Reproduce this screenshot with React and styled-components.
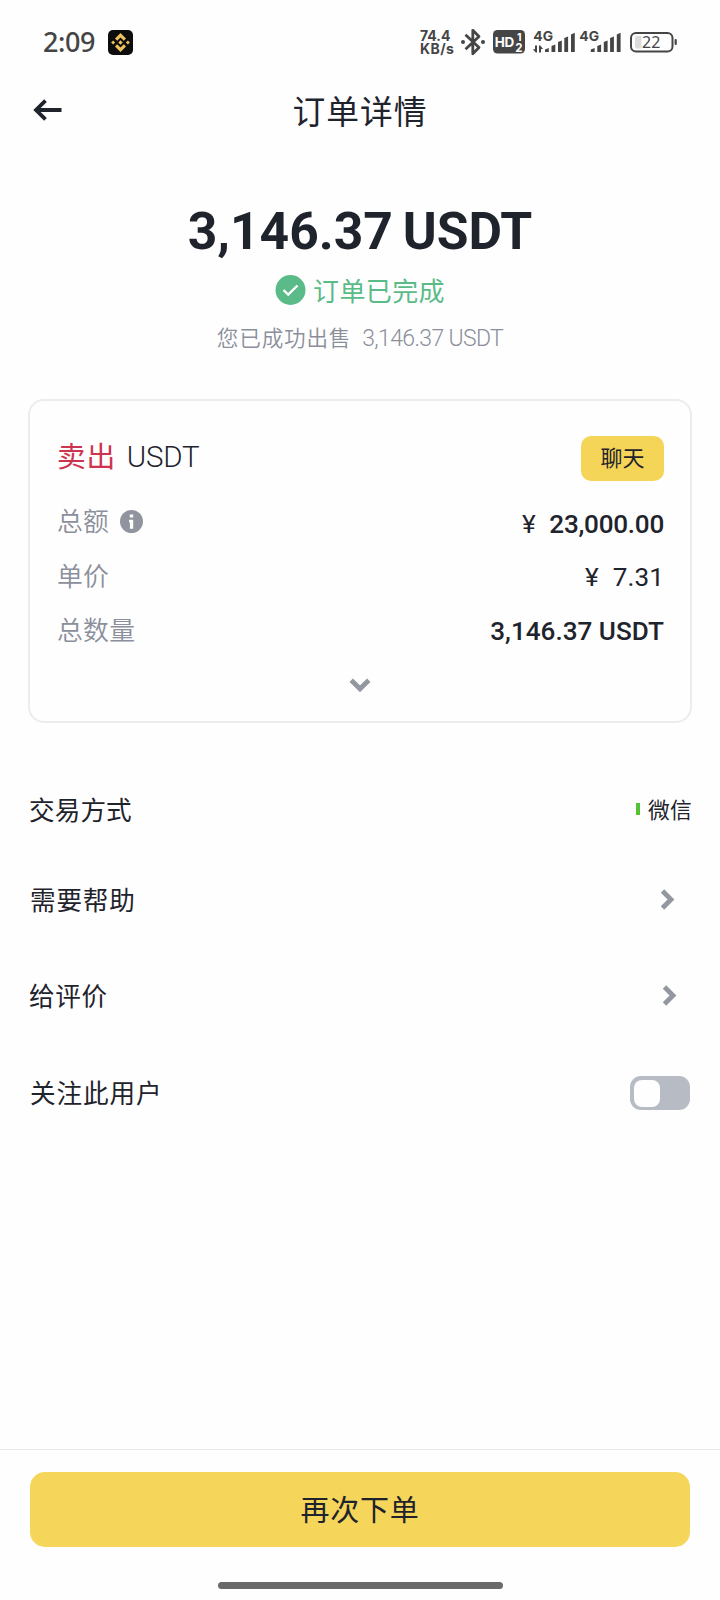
import React, { useState } from 'react';
import styled, { createGlobalStyle } from 'styled-components';

const GlobalStyle = createGlobalStyle`
  * {
    box-sizing: border-box;
  }

  body {
    margin: 0;
    background: #fefefe;
    color: #1f232c;
    font-family: "Noto Sans CJK SC", sans-serif;
  }

  button {
    border: 0;
    padding: 0;
    background: none;
    color: inherit;
    font-family: inherit;
  }

  svg {
    display: block;
  }
`;

const Screen = styled.div`
  display: flex;
  flex-direction: column;
  width: 720px;
  height: 1600px;
  background: #fefefe;
`;

const StatusBar = styled.div`
  display: flex;
  justify-content: space-between;
  align-items: center;
  height: 84px;
  padding: 0 43px 0 43px;
  color: #454545;
`;

const StatusGroup = styled.div`
  display: flex;
  align-items: center;
`;

const Clock = styled.span`
  margin-right: 13px;
  font: 500 27px/30px "Noto Sans", sans-serif;
  letter-spacing: -0.4px;
`;

const NetworkSpeed = styled.div`
  width: 42px;
  padding-left: 1px;
  font: 700 14px/13px Inter, sans-serif;
`;

const SpeedUnit = styled.div`
  letter-spacing: 0.4px;
`;

const Header = styled.header`
  display: grid;
  grid-template-columns: 60px 1fr 60px;
  align-items: center;
  height: 52px;
  padding: 0 30px;
`;

const BackButton = styled.button`
  width: 34px;
  height: 30px;
`;

const Title = styled.h1`
  margin: 0;
  text-align: center;
  font-size: 32.8px;
  font-weight: 400;
  line-height: 48px;
  letter-spacing: 1px;
`;

const Summary = styled.section`
  display: flex;
  flex-direction: column;
  align-items: center;
  height: 263px;
  padding-top: 66px;
`;

const Amount = styled.div`
  font: 700 51.6px/60px Roboto, sans-serif;
  letter-spacing: 0;
  word-spacing: -3px;
`;

const OrderState = styled.div`
  display: flex;
  align-items: center;
  gap: 7px;
  height: 36px;
  margin-top: 10px;
  color: #5abb88;
  font-size: 26px;
  line-height: 36px;
  letter-spacing: 0.4px;
`;

const Note = styled.div`
  display: flex;
  gap: 11px;
  margin-top: 13px;
  color: #8a8f9b;
  font-size: 21.6px;
  font-weight: 350;
  line-height: 32px;
  letter-spacing: 0.8px;
`;

const NoteAmount = styled.span`
  padding-top: 2px;
  font: 350 23px/32px Roboto, sans-serif;
  letter-spacing: -0.65px;
`;

const Card = styled.section`
  display: flex;
  flex-direction: column;
  height: 324px;
  margin: 0 28px;
  padding: 35px 26px 0 27px;
  border: 2px solid #ececee;
  border-radius: 16px;
`;

const CardHeader = styled.div`
  display: flex;
  justify-content: space-between;
  height: 59px;
`;

const Side = styled.div`
  display: flex;
  gap: 11px;
  color: #cd3450;
  font-size: 28.8px;
  line-height: 37px;
  letter-spacing: 0.6px;
`;

const Asset = styled.span`
  color: #1f232c;
  font: 350 29.5px/43px Roboto, sans-serif;
  letter-spacing: -0.2px;
`;

const ChatButton = styled.button`
  width: 83px;
  height: 45px;
  padding-bottom: 4px;
  border-radius: 10px;
  background: #f4d558;
  font-size: 22px;
  line-height: 41px;
`;

const CardRow = styled.div`
  display: flex;
  justify-content: space-between;
  height: 54.5px;
`;

const Label = styled.div`
  display: flex;
  gap: 11px;
  padding-top: 1px;
  color: #8a8f9b;
  font-size: 25.8px;
  font-weight: 350;
  line-height: 48px;
  letter-spacing: 0.3px;

  svg {
    margin-top: 14px;
  }
`;

const Value = styled.div`
  display: flex;
  gap: 14px;
  padding-top: ${props => props.$top || 5}px;
  font: ${props => (props.$strong ? 500 : 400)} 26.1px/48px Roboto, sans-serif;
  letter-spacing: ${props => props.$spacing || 0}px;
`;

const Currency = styled.span`
  font-weight: 400;
`;

const ExpandButton = styled.button`
  align-self: center;
  width: 24px;
  height: 18px;
  margin: 17px 2px 0 0;
`;

const List = styled.section`
  flex: 1;
  padding-top: 44px;
`;

const ListRow = styled.div`
  display: flex;
  align-items: center;
  justify-content: space-between;
  height: ${props => props.$height}px;
  padding: 0 ${props => props.$right}px 0 ${props => props.$left}px;
`;

const ListLabel = styled.span`
  padding-bottom: 2px;
  font-size: 25.6px;
  line-height: 36px;
  letter-spacing: ${props => props.$spacing || 0.6}px;
`;

const PayMethod = styled.span`
  display: flex;
  align-items: center;
  gap: 8px;

  &::before {
    content: '';
    width: 4px;
    height: 12px;
    margin-top: -2px;
    background: #55c236;
  }
`;

const PayName = styled.span`
  padding-bottom: 2px;
  font-size: 21.8px;
  line-height: 32px;
  letter-spacing: 0.2px;
`;

const Toggle = styled.button`
  display: flex;
  justify-content: ${props => (props.$on ? 'flex-end' : 'flex-start')};
  align-items: center;
  width: 60px;
  height: 34px;
  padding: 0 4px;
  border-radius: 11px;
  background: ${props => (props.$on ? '#5abb88' : '#b7bbc4')};
`;

const Knob = styled.span`
  width: 26px;
  height: 27px;
  border-radius: 8px;
  background: #fefefe;
`;

const Footer = styled.footer`
  display: flex;
  flex-direction: column;
  align-items: center;
  height: 151px;
  padding-top: 22px;
  border-top: 1px solid #e8e8ea;
`;

const ReorderButton = styled.button`
  width: 660px;
  height: 75px;
  padding-bottom: 2px;
  border-radius: 15px;
  background: #f5d55a;
  font-size: 29px;
  line-height: 73px;
  letter-spacing: 0.7px;
`;

const HomeIndicator = styled.div`
  width: 285px;
  height: 7px;
  margin-top: 35px;
  border-radius: 4px;
  background: #6a6a6a;
`;

const AppLogo = () => (
  <svg width="25" height="25" viewBox="0 0 25 25">
    <rect width="25" height="25" rx="5" fill="#0d0d0d" />
    <g fill="#ecc25c">
      <path d="M12.5 3 18 8.5l-2.2 2.2-3.3-3.3-3.3 3.3L7 8.5z" />
      <path d="M12.5 22 18 16.5l-2.2-2.2-3.3 3.3-3.3-3.3L7 16.5z" />
      <path d="m12.5 10.3 2.2 2.2-2.2 2.2-2.2-2.2z" />
      <path d="m5.1 10.5 2 2-2 2-2-2z" />
      <path d="m19.9 10.5 2 2-2 2-2-2z" />
    </g>
  </svg>
);

// bluetooth, HD, two signal meters and the battery
const StatusIcons = () => (
  <svg width="216" height="30" viewBox="461 27 216 30" fill="#454545">
    <g fill="none" stroke="#454545" strokeWidth="2.8" strokeLinejoin="round">
      <path d="M465.5 34.8 479 47.5l-6.2 6.2V30.3l6.2 6.2-13.5 12.7" />
    </g>
    <circle cx="463" cy="42" r="2" />
    <circle cx="483" cy="42" r="2" />

    <rect x="493" y="30" width="32" height="23.5" rx="4.5" />
    <g fill="#fefefe" fontFamily="Inter, sans-serif" fontWeight="700">
      <text x="494.8" y="47" fontSize="13.5" letterSpacing="-0.4">HD</text>
      <text x="517" y="41" fontSize="10.5">1</text>
      <text x="515.3" y="51.5" fontSize="11.5">2</text>
    </g>

    <g fontFamily="Inter, sans-serif" fontWeight="700" fontSize="13.8">
      <text x="533.3" y="41">4G</text>
      <text x="579.3" y="41">4G</text>
    </g>
    <path d="M535 45.5h2v7h-1.2l-3-3.2h2.2zM539 52.5h2V49h2.2l-3-3.5H539z" />
    <path d="M545 52v-2.5l3.8-1.5v4zM551.5 52v-6l3.8-1.5V52zM558 52V42l3.8-1.6V52zM564.3 52V38l3.8-1.6V52zM571 52V34.6l3.8-1.8V52z" />
    <path d="M590.8 52v-2.5l3.8-1.5v4zM597.3 52v-6l3.8-1.5V52zM603.8 52V42l3.8-1.6V52zM610.1 52V38l3.8-1.6V52zM616.8 52V34.6l3.8-1.8V52z" />

    <rect x="631" y="33" width="41.5" height="18.5" rx="5" fill="none" stroke="#454545" strokeWidth="2" />
    <path d="M635 38a2 2 0 0 1 2-2h4.5v12.5H637a2 2 0 0 1-2-2z" fill="#dcdcdc" />
    <rect x="674.6" y="39" width="2.2" height="6" rx="1" />
    <text x="642" y="48" fontFamily="Noto Sans, sans-serif" fontWeight="400" fontSize="16">22</text>
  </svg>
);

const BackIcon = () => (
  <svg width="34" height="30" viewBox="0 0 34 30" fill="none" stroke="#1f232c" strokeWidth="3.8">
    <path d="M31.5 15H6M15.5 5.600 6 15l9.5 9.400" />
  </svg>
);

const CheckIcon = () => (
  <svg width="31" height="31" viewBox="0 0 31 31">
    <circle cx="15.5" cy="15" r="15" fill="#5abb88" />
    <path d="m8.5 15 4.7 4.5 9.3-9" fill="none" stroke="#fefefe" strokeWidth="2.4" />
  </svg>
);

const InfoIcon = () => (
  <svg width="23" height="23" viewBox="0 0 23 23">
    <circle cx="11.5" cy="11.5" r="11.5" fill="#8f949f" />
    <path d="M9.8 4.5h3.4v3H9.8zM9 9.7h4.2v9H9.9v-6.5H9z" fill="#fefefe" />
  </svg>
);

const ChevronDown = () => (
  <svg width="24" height="18" viewBox="0 0 24 18" fill="none" stroke="#93979f" strokeWidth="4.8">
    <path d="m3.2 4.3 8.8 8.5 8.8-8.5" />
  </svg>
);

const ChevronRight = () => (
  <svg width="14" height="24" viewBox="0 0 14 24" fill="none" stroke="#93979f" strokeWidth="4.8">
    <path d="m1.5 3 8.5 8.5L1.5 20" />
  </svg>
);

const App = () => {
  const [following, setFollowing] = useState(false);

  return (
    <Screen>
      <GlobalStyle />
      <StatusBar>
        <StatusGroup>
          <Clock>2:09</Clock>
          <AppLogo />
        </StatusGroup>
        <StatusGroup>
          <NetworkSpeed>
            <div>74.4</div>
            <SpeedUnit>KB/s</SpeedUnit>
          </NetworkSpeed>
          <StatusIcons />
        </StatusGroup>
      </StatusBar>

      <Header>
        <BackButton><BackIcon /></BackButton>
        <Title>订单详情</Title>
      </Header>

      <Summary>
        <Amount>3,146.37 USDT</Amount>
        <OrderState>
          <CheckIcon />
          <span>订单已完成</span>
        </OrderState>
        <Note>
          <span>您已成功出售</span>
          <NoteAmount>3,146.37 USDT</NoteAmount>
        </Note>
      </Summary>

      <Card>
        <CardHeader>
          <Side>
            <span>卖出</span>
            <Asset>USDT</Asset>
          </Side>
          <ChatButton>聊天</ChatButton>
        </CardHeader>
        <CardRow>
          <Label>总额 <InfoIcon /></Label>
          <Value $strong $spacing={-0.25}>
            <Currency>¥</Currency>
            <span>23,000.00</span>
          </Value>
        </CardRow>
        <CardRow>
          <Label>单价</Label>
          <Value $top={3} $spacing={0.1}>
            <Currency>¥</Currency>
            <span>7.31</span>
          </Value>
        </CardRow>
        <CardRow>
          <Label>总数量</Label>
          <Value $strong $top={3}>3,146.37 USDT</Value>
        </CardRow>
        <ExpandButton><ChevronDown /></ExpandButton>
      </Card>

      <List>
        <ListRow $height={86} $left={29} $right={28}>
          <ListLabel $spacing={0.1}>交易方式</ListLabel>
          <PayMethod><PayName>微信</PayName></PayMethod>
        </ListRow>
        <ListRow $height={94} $left={30} $right={45}>
          <ListLabel $spacing={0.8}>需要帮助</ListLabel>
          <ChevronRight />
        </ListRow>
        <ListRow $height={98} $left={29} $right={43}>
          <ListLabel>给评价</ListLabel>
          <ChevronRight />
        </ListRow>
        <ListRow $height={96} $left={30} $right={30}>
          <ListLabel $spacing={0.9}>关注此用户</ListLabel>
          <Toggle $on={following} onClick={() => setFollowing(!following)}>
            <Knob />
          </Toggle>
        </ListRow>
      </List>

      <Footer>
        <ReorderButton>再次下单</ReorderButton>
        <HomeIndicator />
      </Footer>
    </Screen>
  );
};

export default App;
